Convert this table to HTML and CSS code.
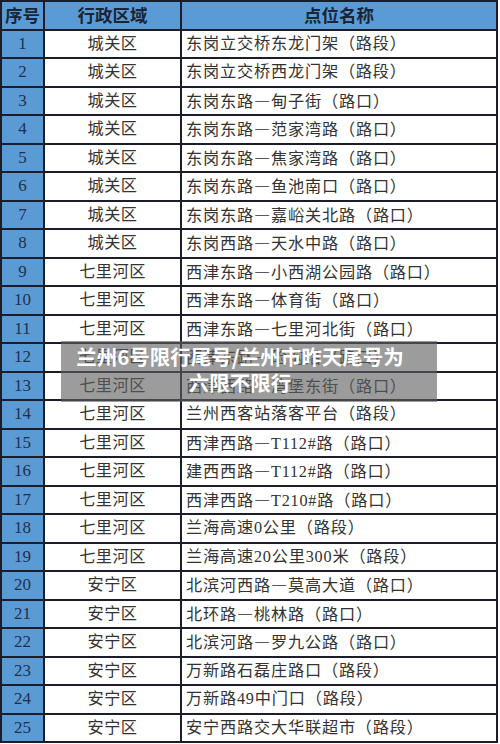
FILE: index.html
```html
<!DOCTYPE html>
<html lang="zh-CN">
<head>
<meta charset="utf-8">
<title>兰州限行点位</title>
<link rel="stylesheet" href="styles.css">
</head>
<body>
<div class="page">
<table class="grid">
<thead>
<tr><th class="c-no">序号</th><th class="c-area">行政区域</th><th class="c-site">点位名称</th></tr>
</thead>
<tbody>
<tr><td class="c-no">1</td><td class="c-area">城关区</td><td class="c-site">东岗立交桥东龙门架（路段）</td></tr>
<tr><td class="c-no">2</td><td class="c-area">城关区</td><td class="c-site">东岗立交桥西龙门架（路段）</td></tr>
<tr><td class="c-no">3</td><td class="c-area">城关区</td><td class="c-site">东岗东路<span class="dash">—</span>甸子街（路口）</td></tr>
<tr><td class="c-no">4</td><td class="c-area">城关区</td><td class="c-site">东岗东路<span class="dash">—</span>范家湾路（路口）</td></tr>
<tr><td class="c-no">5</td><td class="c-area">城关区</td><td class="c-site">东岗东路<span class="dash">—</span>焦家湾路（路口）</td></tr>
<tr><td class="c-no">6</td><td class="c-area">城关区</td><td class="c-site">东岗东路<span class="dash">—</span>鱼池南口（路口）</td></tr>
<tr><td class="c-no">7</td><td class="c-area">城关区</td><td class="c-site">东岗东路<span class="dash">—</span>嘉峪关北路（路口）</td></tr>
<tr><td class="c-no">8</td><td class="c-area">城关区</td><td class="c-site">东岗西路<span class="dash">—</span>天水中路（路口）</td></tr>
<tr><td class="c-no">9</td><td class="c-area">七里河区</td><td class="c-site">西津东路<span class="dash">—</span>小西湖公园路（路口）</td></tr>
<tr><td class="c-no">10</td><td class="c-area">七里河区</td><td class="c-site">西津东路<span class="dash">—</span>体育街（路口）</td></tr>
<tr><td class="c-no">11</td><td class="c-area">七里河区</td><td class="c-site">西津东路<span class="dash">—</span>七里河北街（路口）</td></tr>
<tr><td class="c-no">12</td><td class="c-area">七里河区</td><td class="c-site">西津东路<span class="dash">—</span>硷沟沿（路口）</td></tr>
<tr><td class="c-no">13</td><td class="c-area">七里河区</td><td class="c-site">西津西路<span class="dash">—</span>湾堡东街（路口）</td></tr>
<tr><td class="c-no">14</td><td class="c-area">七里河区</td><td class="c-site">兰州西客站落客平台（路段）</td></tr>
<tr><td class="c-no">15</td><td class="c-area">七里河区</td><td class="c-site">西津西路<span class="dash">—</span>T112#路（路口）</td></tr>
<tr><td class="c-no">16</td><td class="c-area">七里河区</td><td class="c-site">建西西路<span class="dash">—</span>T112#路（路口）</td></tr>
<tr><td class="c-no">17</td><td class="c-area">七里河区</td><td class="c-site">西津西路<span class="dash">—</span>T210#路（路口）</td></tr>
<tr><td class="c-no">18</td><td class="c-area">七里河区</td><td class="c-site">兰海高速0公里（路段）</td></tr>
<tr><td class="c-no">19</td><td class="c-area">七里河区</td><td class="c-site">兰海高速20公里300米（路段）</td></tr>
<tr><td class="c-no">20</td><td class="c-area">安宁区</td><td class="c-site">北滨河西路<span class="dash">—</span>莫高大道（路口）</td></tr>
<tr><td class="c-no">21</td><td class="c-area">安宁区</td><td class="c-site">北环路<span class="dash">—</span>桃林路（路口）</td></tr>
<tr><td class="c-no">22</td><td class="c-area">安宁区</td><td class="c-site">北滨河路<span class="dash">—</span>罗九公路（路口）</td></tr>
<tr><td class="c-no">23</td><td class="c-area">安宁区</td><td class="c-site">万新路石磊庄路口（路段）</td></tr>
<tr><td class="c-no">24</td><td class="c-area">安宁区</td><td class="c-site">万新路49中门口（路段）</td></tr>
<tr><td class="c-no">25</td><td class="c-area">安宁区</td><td class="c-site">安宁西路交大华联超市（路段）</td></tr>
</tbody>
</table>
<div class="caption">兰州6号限行尾号/兰州市昨天尾号为<br>六限不限行</div>
</div>
</body>
</html>
```
FILE: styles.css
```css
html, body {
  margin: 0;
  padding: 0;
  background: #ffffff;
}
.page {
  position: relative;
  width: 500px;
  height: 744px;
  overflow: hidden;
}
.grid {
  border-collapse: collapse;
  width: 498px;
  table-layout: fixed;
  font-family: "Liberation Serif", "Noto Sans CJK SC", serif;
  color: #333333;
}
.grid th, .grid td {
  border: 2px solid #1b1d2a;
  height: 26.5px;
  padding: 0;
  line-height: 24px;
  white-space: nowrap;
  overflow: hidden;
}
.grid th {
  background: #5b9bd5;
  font-family: "Noto Sans CJK SC", sans-serif;
  font-weight: 700;
  font-size: 17.5px;
  color: #1a2536;
  text-align: center;
}
.grid td {
  font-size: 16.2px;
}
.grid th.c-no { width: 41px; }
.grid th.c-area { width: 135px; }
.grid td.c-no {
  background: #5b9bd5;
  text-align: center;
  color: #22304a;
  font-size: 17px;
}
.grid td.c-area {
  text-align: center;
  letter-spacing: 0.5px;
}
.grid td.c-site {
  text-align: left;
  padding-left: 4px;
  letter-spacing: 0.8px;
}
.dash {
  font-family: "Noto Sans CJK SC", sans-serif;
  font-weight: 300;
}
.caption {
  position: absolute;
  left: 61px;
  top: 341px;
  width: 358px;
  height: 58px;
  padding: 3px 18px 0 0;
  box-sizing: content-box;
  background: rgba(95, 95, 95, 0.62);
  color: #ffffff;
  font-family: "Noto Sans CJK SC", sans-serif;
  font-weight: 700;
  font-size: 20.5px;
  line-height: 25.5px;
  text-align: center;
}
```
